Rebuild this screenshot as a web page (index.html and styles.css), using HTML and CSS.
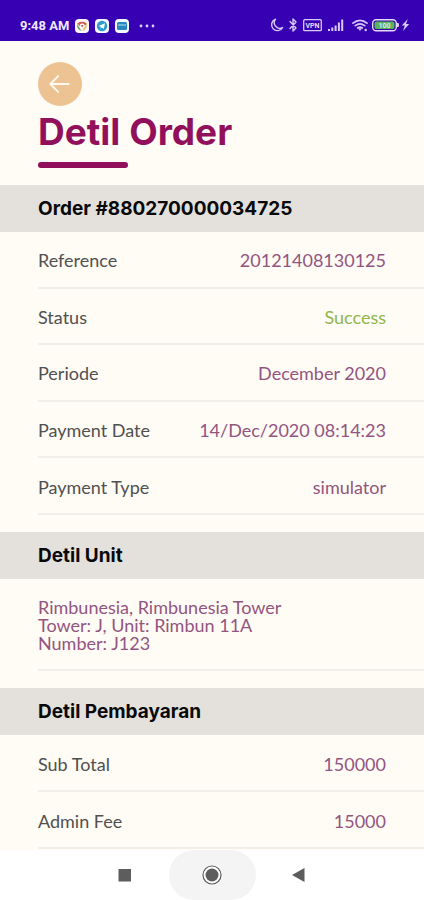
FILE: index.html
```html
<!DOCTYPE html>
<html lang="id">
<head>
<meta charset="utf-8">
<meta name="viewport" content="width=device-width, initial-scale=1">
<title>Detil Order</title>
<link rel="stylesheet" href="styles.css">
</head>
<body>
<div class="screen">
  <header class="status-bar">
    <div class="status-left">
      <time class="clock">9:48 AM</time>
      <svg class="app-icon" viewBox="0 0 14 14" aria-hidden="true">
        <rect width="14" height="14" rx="4" fill="#fbf6fa"/>
        <path d="M2.3 4.2Q7 1.5 11.7 4.2L10.5 6.4 7 5.6 4.6 7Z" fill="#d3604f"/>
        <path d="M2.2 4.4 5.7 10.7 7 12Q3.4 11.5 2.2 8Z" fill="#72a66b"/>
        <path d="M11.8 4.5Q12.5 10.7 7 12L9.7 7.4Z" fill="#e7bd60"/>
        <circle cx="7.2" cy="7" r="2.4" fill="#fff"/>
        <path d="M5.6 6.2 8.6 6 7.3 8.6Z" fill="#a95b50"/>
      </svg>
      <svg class="app-icon" viewBox="0 0 14 14" aria-hidden="true">
        <rect width="14" height="14" rx="4" fill="#f5f8ff"/>
        <circle cx="7" cy="7" r="5.2" fill="#2d9bd3"/>
        <path d="M3.5 7 10 4.3 8.8 10 6.9 8.6 5.8 9.5 5.7 7.8Z" fill="#fff"/>
      </svg>
      <svg class="app-icon" viewBox="0 0 14 14" aria-hidden="true">
        <rect width="14" height="14" rx="4" fill="#f3f8ff"/>
        <rect x="2" y="3" width="10" height="8" rx="1.5" fill="#2786bd"/>
        <path d="M3 6h8" stroke="#9fd5ed" stroke-width="1.2"/>
      </svg>
      <svg class="more-icon" viewBox="0 0 16 4" aria-hidden="true" fill="#ddd0ff">
        <circle cx="2" cy="2" r="1.4"/><circle cx="8" cy="2" r="1.4"/><circle cx="14" cy="2" r="1.4"/>
      </svg>
    </div>
    <svg class="system-icons" viewBox="0 0 140 16" role="img" aria-label="VPN, 100">
      <g fill="none" stroke="#d8caf8" stroke-width="1.4" stroke-linecap="round" stroke-linejoin="round">
        <path d="M5.5 2.2A5.9 5.9 0 1 0 12.7 10.5 5.6 5.6 0 0 1 5.5 2.2Z"/>
        <path d="M20 4.5 26 11 23 14V2L26 5 20 11.5"/>
        <rect x="33.7" y="2.7" width="17.6" height="11" rx="1" stroke-width="1.3"/>
        <path d="M83 6.2Q90 .5 97 6.2M85.3 8.7Q90 5 94.7 8.7M87.7 11Q90 9.3 92.3 11" stroke-width="1.7"/>
      </g>
      <text class="icon-label" x="42.5" y="11" text-anchor="middle">VPN</text>
      <g fill="#d8caf8">
        <path d="M58 12h2v2h-2zM61.3 10.5h2V14h-2zM64.6 8.5h2V14h-2zM67.9 5.5h2V14h-2zM71.2 2.5h2V14h-2z"/>
        <path d="M88 11.2h4L90 14Z"/>
        <circle cx="95.7" cy="13" r="1.2"/>
        <path d="M126.5 6h1.5q1 0 1 1v2q0 1-1 1h-1.5z"/>
        <path d="m137.8 2-6 6.4h3L133 14l6.2-7H136Z"/>
      </g>
      <rect x="102.7" y="2.7" width="23.6" height="11" rx="3.5" fill="#3500ad" stroke="#e6dcfa" stroke-width="1.4"/>
      <rect x="104.5" y="4.5" width="20" height="7.4" rx="2" fill="#54b757"/>
      <text class="icon-label" x="114.5" y="11" text-anchor="middle">100</text>
    </svg>
  </header>

  <main class="content">
    <div class="page-head">
      <button class="back" type="button" aria-label="Kembali">
        <svg viewBox="0 0 24 24" fill="none" stroke="#fffaf0" stroke-width="2" stroke-linecap="round" stroke-linejoin="round" aria-hidden="true">
          <path d="M21.5 12H1.5M10 3.5 1.5 12 10 20.5"/>
        </svg>
      </button>
      <h1 class="title">Detil Order</h1>
    </div>

    <section>
      <h2 class="band">Order #880270000034725</h2>
      <dl class="rows order-rows">
        <div class="row"><dt>Reference</dt><dd>20121408130125</dd></div>
        <div class="row"><dt>Status</dt><dd class="success">Success</dd></div>
        <div class="row"><dt>Periode</dt><dd>December 2020</dd></div>
        <div class="row"><dt>Payment Date</dt><dd>14/Dec/2020 08:14:23</dd></div>
        <div class="row"><dt>Payment Type</dt><dd>simulator</dd></div>
      </dl>
    </section>

    <section>
      <h2 class="band">Detil Unit</h2>
      <p class="unit">Rimbunesia, Rimbunesia Tower<br>Tower: J, Unit: Rimbun 11A<br>Number: J123</p>
    </section>

    <section>
      <h2 class="band">Detil Pembayaran</h2>
      <dl class="rows payment-rows">
        <div class="row"><dt>Sub Total</dt><dd>150000</dd></div>
        <div class="row"><dt>Admin Fee</dt><dd>15000</dd></div>
      </dl>
    </section>
  </main>

  <nav class="nav-bar" aria-label="Sistem">
    <button type="button" class="nav-button" aria-label="Aplikasi terbaru">
      <svg viewBox="0 0 20 20" aria-hidden="true"><rect x="3.5" y="4" width="12.5" height="12.5" fill="#5d5d5d"/></svg>
    </button>
    <button type="button" class="nav-button home" aria-label="Beranda">
      <svg viewBox="0 0 20 20" aria-hidden="true"><circle cx="10" cy="10" r="9" fill="#fff" stroke="#5d5d5d" stroke-width="1.2"/><circle cx="10" cy="10" r="6.5" fill="#5d5d5d"/></svg>
    </button>
    <button type="button" class="nav-button" aria-label="Kembali">
      <svg viewBox="0 0 20 20" aria-hidden="true"><path d="M3 10 15.5 3V17Z" fill="#5d5d5d"/></svg>
    </button>
  </nav>
</div>
</body>
</html>
```
FILE: styles.css
```css
* {
  box-sizing: border-box;
}

body,
h1,
h2,
p,
dl,
dd {
  margin: 0;
}

body {
  background: #fffbf5;
  color: #505050;
  font: 18px/20px Lato, "Open Sans", sans-serif;
}

button {
  border: 0;
  padding: 0;
  cursor: pointer;
}

.screen {
  display: grid;
  grid-template-rows: auto minmax(0, 1fr) auto;
  height: 100vh;
}

.status-bar {
  display: flex;
  align-items: flex-end;
  justify-content: space-between;
  height: 41px;
  padding: 0 14px 8px 20px;
  background: #3700b3;
}

.status-left {
  display: flex;
  align-items: center;
  gap: 6px;
}

.clock {
  color: #efe8ff;
  font: 700 13px/14px Roboto, sans-serif;
}

.app-icon {
  width: 14px;
  height: 14px;
}

.more-icon {
  width: 16px;
  height: 4px;
  margin-left: 4px;
}

.system-icons {
  width: 140px;
  height: 16px;
}

.icon-label {
  fill: #e6dcfa;
  font: 700 7px Roboto, sans-serif;
}

.content {
  overflow: hidden;
}

.page-head {
  padding: 21px 38px 17px;
}

.back {
  display: grid;
  place-items: center;
  width: 44px;
  height: 44px;
  border-radius: 50%;
  background: #eec393;
}

.back svg {
  width: 22px;
  height: 22px;
}

.title {
  padding-top: 6px;
  color: #910f5b;
  font: 700 37px/40px Inter, sans-serif;
}

.title::after {
  content: "";
  display: block;
  width: 90px;
  height: 6px;
  margin-top: 10px;
  border-radius: 3px;
  background: #910f5b;
}

.band {
  padding: 12px 38px 11px;
  background: #e4e1dd;
  color: #090909;
  font: 700 19px/24px Inter, sans-serif;
}

.rows {
  display: grid;
  grid-auto-rows: 1fr;
  padding-left: 38px;
}

.order-rows {
  min-height: 283px;
  margin-bottom: 17px;
}

.payment-rows {
  min-height: 114px;
}

.row {
  display: flex;
  align-items: center;
  justify-content: space-between;
  padding: 2px 38px 0 0;
  border-bottom: 2px solid #f2efea;
}

.row dd {
  color: #925580;
}

.row .success {
  color: #91b64e;
}

.unit {
  margin: 0 0 17px 38px;
  padding: 19px 38px 17px 0;
  border-bottom: 2px solid #f2efea;
  color: #925580;
  line-height: 18px;
}

.nav-bar {
  display: flex;
  justify-content: center;
  height: 50px;
  background: #fff;
}

.nav-button {
  display: grid;
  place-items: center;
  width: 87px;
  background: transparent;
}

.nav-button svg {
  width: 20px;
  height: 20px;
}

.home {
  border-radius: 25px;
  background: #f4f4f4;
}
```
